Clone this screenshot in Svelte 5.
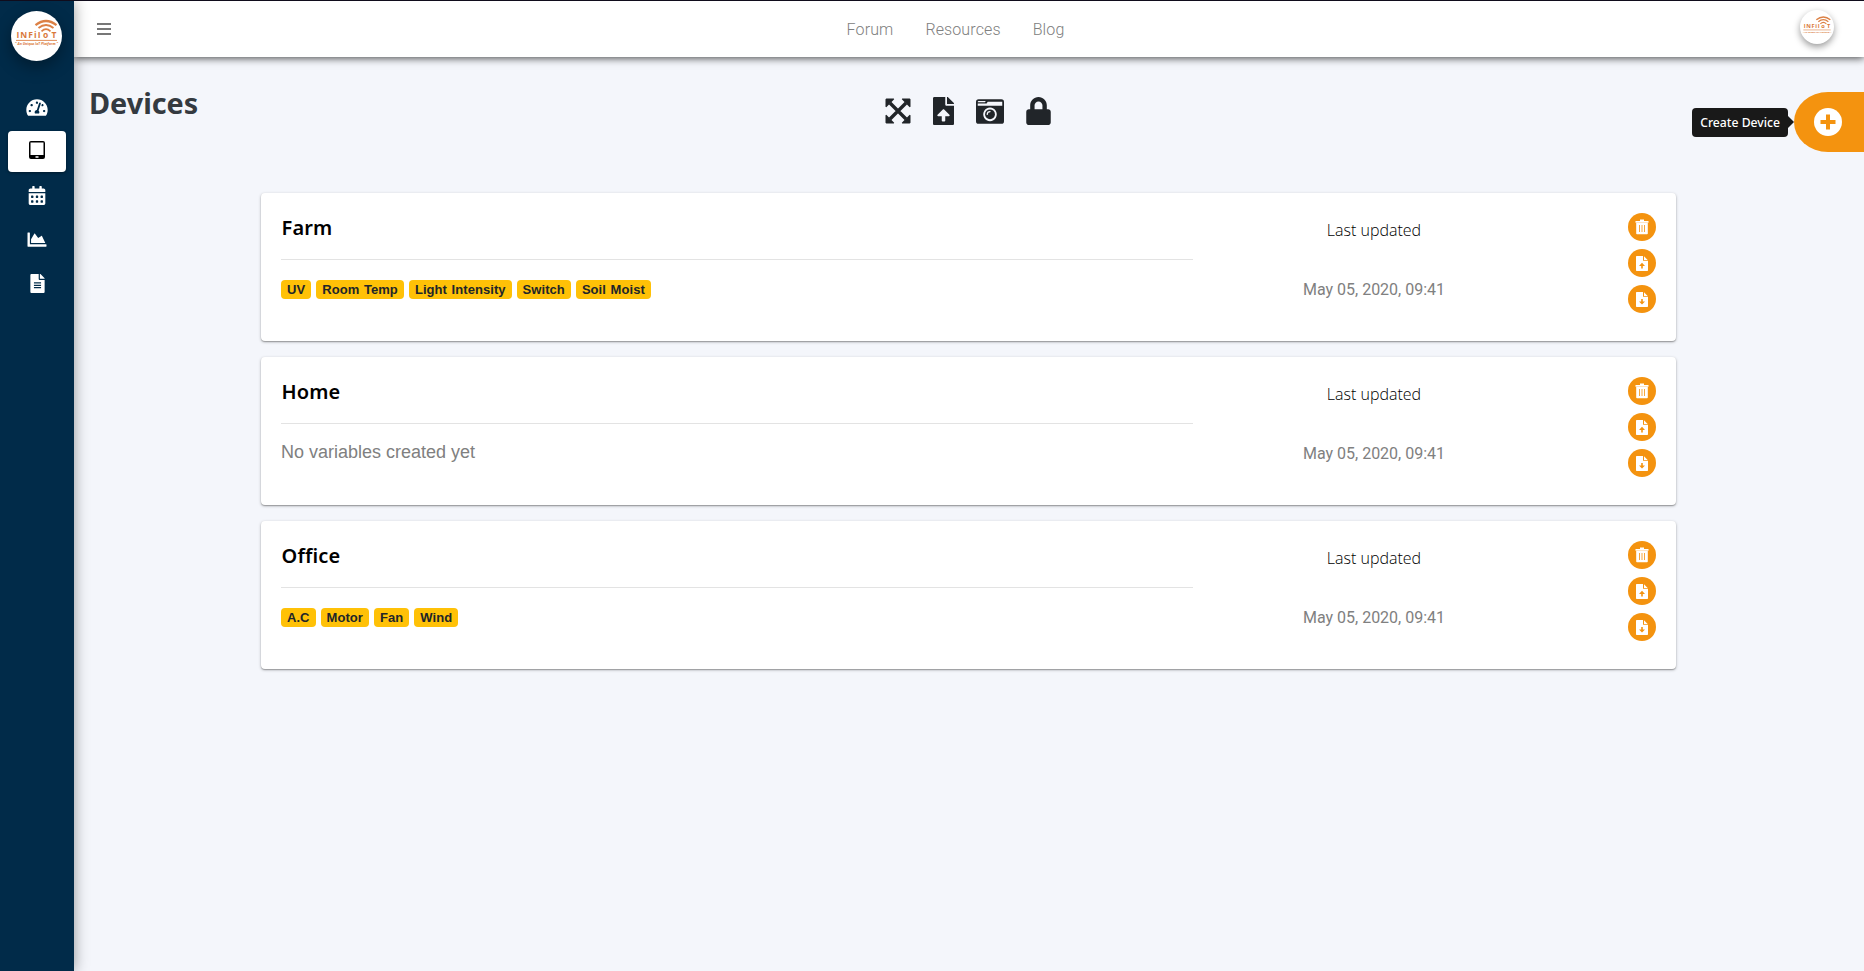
<script>
  const menu = [
    { name: 'dashboard', box: '0 0 576 512', width: 22, height: 19 },
    { name: 'devices', box: '0 0 16 18', width: 16, height: 18, active: true },
    { name: 'calendar', box: '0 0 448 512', width: 18, height: 19 },
    { name: 'chart', box: '0 0 512 512', width: 20, height: 19 },
    { name: 'reports', box: '0 0 384 512', width: 15, height: 19 }
  ];

  const links = ['Forum', 'Resources', 'Blog'];

  const devices = [
    {
      name: 'Farm',
      variables: ['UV', 'Room Temp', 'Light Intensity', 'Switch', 'Soil Moist'],
      updated: 'May 05, 2020, 09:41'
    },
    { name: 'Home', variables: [], updated: 'May 05, 2020, 09:41' },
    {
      name: 'Office',
      variables: ['A.C', 'Motor', 'Fan', 'Wind'],
      updated: 'May 05, 2020, 09:41'
    }
  ];
</script>

{#snippet logo()}
  <svg class="logo" viewBox="0 0 51 50">
    <g fill="none" stroke="#dc8146">
      <path d="M24.5 14.2Q35 5.800 45.500 14.200" stroke-width="2.200" />
      <path d="M27.500 17Q35 11 42.500 17" stroke-width="1.900" />
      <path d="M30.500 20.300Q35 16 39.500 20.300" stroke-width="1.700" />
      <path d="M5 29.400H46" stroke-width="0.900" />
    </g>
    <g fill="#d9793b" font-family="Open Sans, sans-serif" font-weight="700">
      <text x="5.500" y="26.800" font-size="8.500" textLength="24">INFiI</text>
      <text x="32" y="26.800" font-size="8.500">o</text>
      <text x="40.500" y="26.800" font-size="8.500">T</text>
      <text x="4" y="34.300" font-size="3.600" textLength="43" lengthAdjust="spacingAndGlyphs" font-style="italic">" An Unique IoT Platform "</text>
    </g>
  </svg>
{/snippet}

<div class="app">
  <aside>
    <a class="brand" href="#home" aria-label="INFiIoT">{@render logo()}</a>
    <nav>
      {#each menu as item}
        <a href="#{item.name}" class:active={item.active} aria-label={item.name}>
          <svg viewBox={item.box} width={item.width} height={item.height}>
            {#if item.name === 'dashboard'}
              <path d="M288 32C128.940 32 0 160.940 0 320c0 52.800 14.250 102.260 39.060 144.800 5.610 9.620 16.300 15.200 27.440 15.200h443c11.140 0 21.830-5.580 27.440-15.200C561.750 422.260 576 372.800 576 320c0-159.060-128.940-288-288-288zm0 64c14.710 0 26.580 10.130 30.320 23.650-1.110 2.260-2.640 4.230-3.450 6.670l-9.220 27.670c-5.130 3.490-10.970 6.010-17.640 6.010-17.670 0-32-14.330-32-32S270.330 96 288 96zM96 384c-17.670 0-32-14.330-32-32s14.330-32 32-32 32 14.330 32 32-14.330 32-32 32zm48-160c-17.670 0-32-14.330-32-32s14.330-32 32-32 32 14.330 32 32-14.330 32-32 32zm246.770-72.410l-61.330 184C343.130 347.330 352 364.540 352 384c0 11.720-3.380 22.550-8.880 32H232.880c-5.500-9.450-8.880-20.280-8.880-32 0-33.940 26.500-61.430 59.900-63.590l61.340-184.010c4.170-12.560 17.730-19.450 30.360-15.170 12.570 4.190 19.350 17.790 15.170 30.360zm14.660 57.200l15.520-46.550c3.470-1.290 7.130-2.230 11.050-2.230 17.670 0 32 14.330 32 32s-14.330 32-32 32c-11.380-.010-20.890-6.280-26.570-15.220zM480 384c-17.670 0-32-14.330-32-32s14.330-32 32-32 32 14.330 32 32-14.330 32-32 32z" />
            {:else if item.name === 'devices'}
              <path fill-rule="evenodd" d="M2 0h12q2 0 2 2v14q0 2-2 2H2q-2 0-2-2V2q0-2 2-2zM1.500 1.500v12.500h13V1.500zM6.500 15.200v1.600h3v-1.600z" />
            {:else if item.name === 'calendar'}
              <path fill-rule="evenodd" d="M0 464c0 26.500 21.500 48 48 48h352c26.500 0 48-21.500 48-48V192H0zM76 256h40q12 0 12 12v40q0 12-12 12H76q-12 0-12-12v-40q0-12 12-12zm128 0h40q12 0 12 12v40q0 12-12 12h-40q-12 0-12-12v-40q0-12 12-12zm128 0h40q12 0 12 12v40q0 12-12 12h-40q-12 0-12-12v-40q0-12 12-12zM76 384h40q12 0 12 12v40q0 12-12 12H76q-12 0-12-12v-40q0-12 12-12zm128 0h40q12 0 12 12v40q0 12-12 12h-40q-12 0-12-12v-40q0-12 12-12zm128 0h40q12 0 12 12v40q0 12-12 12h-40q-12 0-12-12v-40q0-12 12-12z" />
              <path d="M400 64h-48V16c0-8.800-7.200-16-16-16h-32c-8.800 0-16 7.200-16 16v48H160V16c0-8.800-7.200-16-16-16h-32c-8.800 0-16 7.200-16 16v48H48C21.500 64 0 85.500 0 112v48h448v-48c0-26.500-21.500-48-48-48z" />
            {:else if item.name === 'chart'}
              <path d="M500 384c6.600 0 12 5.400 12 12v40c0 6.600-5.400 12-12 12H12c-6.600 0-12-5.400-12-12V76c0-6.600 5.400-12 12-12h40c6.600 0 12 5.400 12 12v308h436zM372.700 159.500L288 216l-85.300-113.700c-5.100-6.800-15.500-6.300-19.900 1L96 248v104h384l-89.900-187.800c-3.200-6.500-11.400-8.700-17.400-4.700z" />
            {:else}
              <path fill-rule="evenodd" d="M224 136V0H24C10.700 0 0 10.700 0 24v464c0 13.300 10.700 24 24 24h336c13.300 0 24-10.700 24-24V160H248c-13.200 0-24-10.800-24-24zM96 224h192v32H96zm0 64h192v32H96zm0 64h192v32H96zM384 121.900v6.100H256V0h6.100c6.400 0 12.500 2.500 17 7l97.900 98c4.500 4.500 7 10.600 7 16.900z" />
            {/if}
          </svg>
        </a>
      {/each}
    </nav>
  </aside>

  <div class="page">
    <header class="topbar">
      <button class="toggle" aria-label="Toggle menu"><i></i><i></i><i></i></button>
      <nav>
        {#each links as link}
          <a href="#{link}">{link}</a>
        {/each}
      </nav>
      <a class="avatar" href="#profile" aria-label="Profile">{@render logo()}</a>
    </header>

    <main>
      <div class="heading">
        <h1>Devices</h1>
        <div class="tools">
          <svg viewBox="0 0 26 26" width="26" height="26">
            <path d="M5 5L21 21M21 5L5 21" stroke="currentColor" stroke-width="3.400" />
            <path d="M1.300.5H8.800L9.200 1.300 1.300 9.200.5 8.800V1.300zM24.700.5H17.200L16.800 1.300 24.700 9.200 25.500 8.800V1.300zM1.300 25.500H8.800L9.200 24.700 1.300 16.800.5 17.200V24.700zM24.700 25.500H17.200L16.800 24.700 24.700 16.800 25.500 17.200V24.700z" />
          </svg>
          <svg viewBox="0 0 384 512" width="21" height="28">
            <path d="M224 136V0H24C10.700 0 0 10.700 0 24v464c0 13.300 10.700 24 24 24h336c13.300 0 24-10.700 24-24V160H248c-13.200 0-24-10.800-24-24zm65.180 216.010H224v80c0 8.840-7.160 16-16 16h-32c-8.840 0-16-7.160-16-16v-80H94.820c-14.280 0-21.410-17.290-11.270-27.360l96.420-95.700c6.650-6.610 17.390-6.610 24.040 0l96.420 95.700c10.150 10.070 3.030 27.360-11.250 27.360zM377 105L279.100 7c-4.500-4.500-10.600-7-17-7H256v128h128v-6.100c0-6.300-2.500-12.400-7-16.900z" />
          </svg>
          <svg viewBox="0 0 512 448" width="28" height="25">
            <path fill-rule="evenodd" d="M48 0h416q48 0 48 48v352q0 48-48 48H48q-48 0-48-48V48Q0 0 48 0zM32 76v44h448V44H214l-20 32zM48 34q-16 0-16 16v6h132l14-22zM256 152a124 124 0 1 0 .1 0z" />
            <circle cx="256" cy="276" r="90" />
            <path d="M205 278a52 52 0 0 1 52-52" fill="none" stroke="#f4f6fb" stroke-width="22" stroke-linecap="round" />
          </svg>
          <svg viewBox="0 0 448 512" width="25" height="28">
            <path d="M400 224h-24v-72C376 68.200 307.800 0 224 0S72 68.200 72 152v72H48c-26.500 0-48 21.500-48 48v192c0 26.500 21.500 48 48 48h352c26.500 0 48-21.500 48-48V272c0-26.500-21.500-48-48-48zm-104 0H152v-72c0-39.700 32.300-72 72-72s72 32.300 72 72v72z" />
          </svg>
        </div>
        <div class="create">
          <span class="tip">Create Device</span>
          <button class="fab" aria-label="Create Device">
            <svg viewBox="0 0 28 28" width="28" height="28">
              <circle cx="14" cy="14" r="14" fill="#fff" />
              <path d="M14 6.500V21.500M6.500 14H21.500" stroke="#f4930f" stroke-width="4" />
            </svg>
          </button>
        </div>
      </div>

      <section class="devices">
        {#each devices as device}
          <article>
            <div class="info">
              <h2>{device.name}</h2>
              <div class="variables">
                {#each device.variables as variable}
                  <span class="badge">{variable}</span>
                {:else}
                  <p>No variables created yet</p>
                {/each}
              </div>
            </div>
            <div class="updated">
              <h3>Last updated</h3>
              <p>{device.updated}</p>
            </div>
            <div class="actions">
              <button aria-label="Delete">
                <svg viewBox="0 0 14 16" width="14" height="16">
                  <path fill-rule="evenodd" d="M5 .5h4V2h4.500v1.700H.5V2H5zM1.200 4h11.600v10.500q0 .8-.8.8H2q-.8 0-.8-.8zM4 6v7h.8V6zm2.600 0v7h.8V6zm2.600 0v7h.8V6z" />
                </svg>
              </button>
              <button aria-label="Upload">
                <svg viewBox="0 0 12 15" width="12" height="15">
                  <path fill-rule="evenodd" d="M.7 0H7v4.800h5V14.300q0 .7-.7.7H.7Q0 15 0 14.300V.7Q0 0 .7 0zM6 6.800L3 10h2.200v2.500h1.600V10H9zM8 .3L11.700 4H8z" />
                </svg>
              </button>
              <button aria-label="Download">
                <svg viewBox="0 0 12 15" width="12" height="15">
                  <path fill-rule="evenodd" d="M.7 0H7v4.800h5V14.300q0 .7-.7.7H.7Q0 15 0 14.300V.7Q0 0 .7 0zM6 12.500L3 9.500h2.200V7h1.600v2.500H9zM8 .3L11.700 4H8z" />
                </svg>
              </button>
            </div>
          </article>
        {/each}
      </section>
    </main>
  </div>
</div>

<style>
  :global(body) {
    margin: 0;
  }

  .app {
    box-sizing: border-box;
    display: flex;
    height: 971px;
    border-top: 1px solid #100c1c;
    background: #f4f6fb;
    color: #212529;
    font-family: Roboto, sans-serif;
    overflow: hidden;
  }

  svg {
    display: block;
    fill: currentColor;
  }

  a {
    color: inherit;
    text-decoration: none;
  }

  button {
    padding: 0;
    border: 0;
  }

  h1, h2, h3, p {
    margin: 0;
  }

  aside {
    z-index: 2;
    flex: none;
    width: 74px;
    background: #012b49;
    color: #fff;
    box-shadow: 0 0 14px rgba(0, 0, 0, 0.4);
  }

  .brand {
    display: block;
    width: 51px;
    height: 50px;
    margin: 10px 0 0 11px;
    border-radius: 50%;
    background: #fff;
    box-shadow: 0 6px 16px rgba(0, 0, 0, 0.35);
  }

  .logo {
    width: 100%;
    height: 100%;
  }

  aside nav {
    display: flex;
    flex-direction: column;
    gap: 3px;
    margin: 26px 8px 0;
  }

  aside nav a {
    display: flex;
    align-items: center;
    justify-content: center;
    height: 41px;
    border-radius: 4px;
  }

  aside nav a.active {
    background: #fff;
    color: #000;
    box-shadow: 0 1px 3px rgba(0, 0, 0, 0.4);
  }

  aside nav a.active svg {
    margin-bottom: 3px;
  }

  .page {
    flex: 1;
  }

  .topbar {
    display: grid;
    grid-template-columns: 1fr auto 1fr;
    align-items: center;
    box-sizing: border-box;
    height: 56px;
    padding: 0 30px 0 23px;
    background: #fff;
    color: #808080;
    box-shadow: 0 1px 8px rgba(0, 0, 0, 0.75);
  }

  .toggle {
    display: grid;
    gap: 3px;
    width: 14px;
    background: none;
  }

  .toggle i {
    height: 2px;
    background: #777;
  }

  .topbar nav {
    display: flex;
    gap: 32px;
    padding-right: 20px;
    font-size: 16px;
    font-weight: 300;
    letter-spacing: 0.12px;
  }

  .avatar {
    justify-self: end;
    width: 34px;
    height: 34px;
    margin-bottom: 4px;
    border-radius: 50%;
    background: #fff;
    box-shadow: 0 3px 7px rgba(0, 0, 0, 0.4);
  }

  .heading {
    display: grid;
    grid-template-columns: 1fr auto 1fr;
    align-items: start;
    height: 136px;
  }

  h1 {
    padding: 26px 0 0 15px;
    color: #343a40;
    font: 700 28.8px/40px "Noto Sans", sans-serif;
  }

  .tools {
    display: flex;
    align-items: center;
    gap: 22px;
    padding: 40px 3px 0 0;
  }

  .create {
    display: flex;
    align-items: center;
    justify-content: flex-end;
    padding-top: 35px;
  }

  .tip {
    position: relative;
    margin-right: 6px;
    padding: 0 8px;
    border-radius: 4px;
    background: #191919;
    color: #fff;
    font: 500 12.2px/29px "Noto Sans", sans-serif;
  }

  .tip::after {
    content: '';
    position: absolute;
    top: 8px;
    left: 100%;
    border: 6px solid transparent;
    border-left-color: #191919;
    border-right: 0;
  }

  .fab {
    display: flex;
    align-items: center;
    width: 70px;
    height: 60px;
    padding-left: 20px;
    border-radius: 34px 0 0 34px / 30px 0 0 30px;
    background: #f4930f;
  }

  .devices {
    display: grid;
    gap: 16px;
    margin: 0 188px 0 187px;
  }

  article {
    display: flex;
    box-sizing: border-box;
    height: 148px;
    padding: 20px;
    border-radius: 4px;
    background: #fff;
    box-shadow: 0 1px 3px rgba(0, 0, 0, 0.3), 0 1px 1px rgba(0, 0, 0, 0.2);
  }

  .info {
    width: 912px;
  }

  h2 {
    height: 46px;
    border-bottom: 1px solid #e3e3e3;
    color: #000;
    font: 600 20px/30px "Noto Sans", sans-serif;
    letter-spacing: 0.15px;
    text-indent: 0.5px;
  }

  .variables {
    display: flex;
    gap: 5px;
    padding-top: 20px;
  }

  .variables p {
    margin-top: -2px;
    color: #808080;
    font: 18px/20px "Liberation Sans", sans-serif;
  }

  .badge {
    padding: 0 6px;
    border-radius: 4px;
    background: #ffc107;
    color: #212529;
    font: 700 13px/19px "Liberation Sans", sans-serif;
    letter-spacing: 0.06px;
    word-spacing: 1px;
  }

  .updated {
    width: 362px;
    text-align: center;
  }

  h3 {
    margin-top: 5px;
    color: #000;
    font: 300 16px/24px "Open Sans", sans-serif;
  }

  .updated p {
    margin-top: 37px;
    color: #808080;
    font-size: 16px;
    line-height: 22px;
  }

  .actions {
    display: grid;
    align-content: start;
    gap: 8px;
    margin-left: auto;
  }

  .actions button {
    display: flex;
    align-items: center;
    justify-content: center;
    width: 28px;
    height: 28px;
    border-radius: 50%;
    background: #f4930f;
    color: #fff;
  }
</style>
